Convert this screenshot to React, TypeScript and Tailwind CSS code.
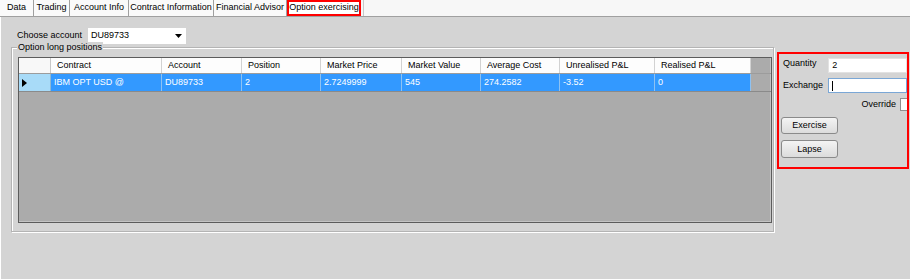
const tabs = [
  { label: 'Data', w: 'w-[34px]' },
  { label: 'Trading', w: 'w-[36px]' },
  { label: 'Account Info', w: 'w-[59px]' },
  { label: 'Contract Information', w: 'w-[85px]' },
  { label: 'Financial Advisor', w: 'w-[73px]' },
];

const columns = [
  { label: 'Contract', value: 'IBM OPT USD @', w: 'w-[111px]' },
  { label: 'Account', value: 'DU89733', w: 'w-[80px]' },
  { label: 'Position', value: '2', w: 'w-[79px]' },
  { label: 'Market Price', value: '2.7249999', w: 'w-[81px]' },
  { label: 'Market Value', value: '545', w: 'w-[79px]' },
  { label: 'Average Cost', value: '274.2582', w: 'w-[79px]' },
  { label: 'Unrealised P&L', value: '-3.52', w: 'w-[95px]' },
  { label: 'Realised P&L', value: '0', w: 'w-[96px]' },
];

function WinButton({ label, h }: { label: string; h: string }) {
  return (
    <button className={`w-[57px] ${h} rounded-[3px] border border-[#8a8a8a] bg-gradient-to-b from-[#f4f4f4] to-[#dcdcdc] text-black leading-none flex items-center justify-center`}>
      {label}
    </button>
  );
}

export default function App() {
  return (
    <div className="w-[910px] h-[279px] flex flex-col bg-white overflow-hidden text-[9px] text-black font-['Liberation_Sans',Arial,sans-serif]">
      {/* tab strip */}
      <div className="h-[17px] flex shrink-0 border-b border-[#a0a0a0] bg-[#f7f7f7]">
        {tabs.map(t => (
          <div
            key={t.label}
            className={`${t.w} h-full flex items-center justify-center border-r border-[#a0a0a0] bg-[#fafafa] whitespace-nowrap`}
          >
            {t.label}
          </div>
        ))}
        <div className="w-[74px] h-[16px] flex items-center justify-center border-2 border-[#ff0000] bg-white whitespace-nowrap">
          Option exercising
        </div>
        <div className="w-px h-full ml-[2px] bg-[#c8c8c8]" />
      </div>

      {/* page */}
      <div className="flex-1 flex bg-[#d4d4d4] border-l border-white">
        <div className="w-[774px] flex flex-col">
          <div className="mt-[11px] ml-[16px] h-[16px] flex items-center">
            <span className="w-[71px]">Choose account</span>
            <div className="w-[98px] h-[16px] bg-white flex items-center pl-[3px] pr-[4px]">
              <span className="flex-1">DU89733</span>
              <svg width="7" height="4" viewBox="0 0 7 4">
                <path d="M0 0 L7 0 L3.5 4 Z" fill="black" />
              </svg>
            </div>
          </div>

          <div className="relative mt-[3px] ml-[10px] w-[763px] h-[185px] border border-[#b4b4b4] shadow-[inset_1px_1px_0_#ffffff,1px_1px_0_#ffffff]">
            <span className="absolute -top-[6px] left-[5px] px-px leading-[11px] bg-[#d4d4d4]">Option long positions</span>

            <div className="mt-[9px] ml-[6px] w-[754px] h-[166px] border border-[#5c5c5c] bg-[#ababab] shadow-[inset_-1px_-1px_0_#c4c4c4]">
              <div className="flex h-[16px] border-b border-[#9c9c9c]">
                <div className="w-[32px] bg-[#f8f8f8] border-r border-[#c8c8c8]" />
                {columns.map(c => (
                  <div key={c.label} className={`${c.w} bg-[#fdfdfd] border-r border-[#d2d2d2] flex items-center pl-[6px] whitespace-nowrap`}>
                    {c.label}
                  </div>
                ))}
              </div>
              <div className="flex h-[18px] border-b border-[#8a8a8a]">
                <div className="w-[32px] bg-[#a8dbf8] border-r border-[#8fb8d4] flex items-center pl-[3px]">
                  <svg width="5" height="8" viewBox="0 0 5 8">
                    <path d="M0 0 L5 4 L0 8 Z" fill="black" />
                  </svg>
                </div>
                {columns.map(c => (
                  <div key={c.label} className={`${c.w} bg-[#3399ff] border-r border-[#8ec2f2] flex items-center pl-[3px] text-white whitespace-nowrap`}>
                    {c.value}
                  </div>
                ))}
              </div>
            </div>
          </div>
        </div>

        {/* exercise panel */}
        <div className="flex-1 pt-[35px] pl-[2px]">
          <div className="w-[132px] h-[117px] border-2 border-[#ff0000] overflow-hidden flex flex-col pt-[4px] pl-[4px]">
            <div className="flex items-center h-[15px]">
              <span className="w-[46px] -mt-[3px]">Quantity</span>
              <div className="w-[80px] h-[15px] bg-white border border-[#e2e2e2] flex items-center pl-[3px]">2</div>
            </div>
            <div className="flex items-center h-[15px] mt-[5px]">
              <span className="w-[46px]">Exchange</span>
              <div className="w-[80px] h-[15px] bg-white border border-[#7aa7d6] flex items-center pl-[3px]">
                <div className="w-px h-[10px] bg-black" />
              </div>
            </div>
            <div className="flex items-center justify-end h-[13px] mt-[5px] -mr-[6px]">
              <span className="mr-[4px]">Override</span>
              <div className="w-[13px] h-[13px] bg-white border border-[#8f8f8f]" />
            </div>
            <div className="mt-[6px] -ml-[2px] flex flex-col gap-[6px]">
              <WinButton label="Exercise" h="h-[17px]" />
              <WinButton label="Lapse" h="h-[18px]" />
            </div>
          </div>
        </div>
      </div>
    </div>
  );
}
